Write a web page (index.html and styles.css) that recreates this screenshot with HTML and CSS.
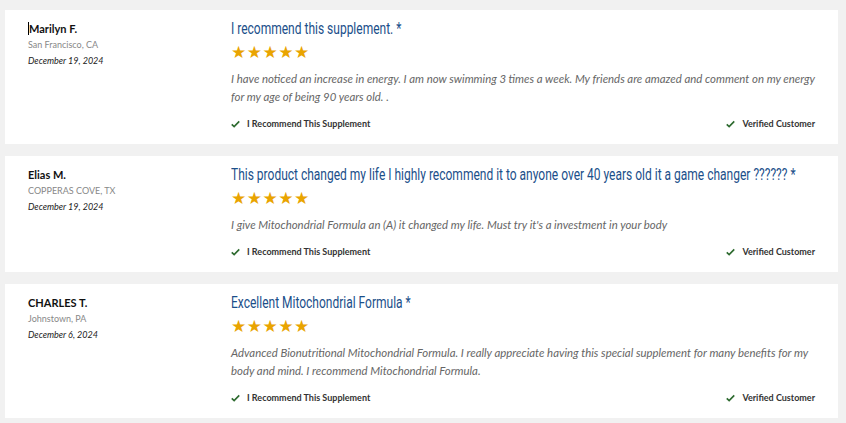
FILE: index.html
```html
<!DOCTYPE html>
<html>
<head>
<meta charset="utf-8">
<link rel="stylesheet" href="styles.css">
</head>
<body>
<div class="list">
  <div class="card">
    <div class="meta">
      <div class="name"><span class="caret"></span>Marilyn F.</div>
      <div class="loc">San Francisco, CA</div>
      <div class="date">December 19, 2024</div>
    </div>
    <div class="main">
      <div class="title">I recommend this supplement. *</div>
      <div class="stars">★★★★★</div>
      <div class="body">I have noticed an increase in energy. I am now swimming 3 times a week. My friends are amazed and comment on my energy for my age of being 90 years old. .</div>
      <div class="foot">
        <span class="tag"><svg class="chk" viewBox="0 0 12 10"><path d="M1 5.5 L4.2 8.5 L11 1.5" /></svg>I Recommend This Supplement</span>
        <span class="tag"><svg class="chk" viewBox="0 0 12 10"><path d="M1 5.5 L4.2 8.5 L11 1.5" /></svg>Verified Customer</span>
      </div>
    </div>
  </div>
  <div class="card">
    <div class="meta">
      <div class="name">Elias M.</div>
      <div class="loc">COPPERAS COVE, TX</div>
      <div class="date">December 19, 2024</div>
    </div>
    <div class="main">
      <div class="title">This product changed my life I highly recommend it to anyone over 40 years old it a game changer ?????? *</div>
      <div class="stars">★★★★★</div>
      <div class="body">I give Mitochondrial Formula an (A) it changed my life. Must try it's a investment in your body</div>
      <div class="foot">
        <span class="tag"><svg class="chk" viewBox="0 0 12 10"><path d="M1 5.5 L4.2 8.5 L11 1.5" /></svg>I Recommend This Supplement</span>
        <span class="tag"><svg class="chk" viewBox="0 0 12 10"><path d="M1 5.5 L4.2 8.5 L11 1.5" /></svg>Verified Customer</span>
      </div>
    </div>
  </div>
  <div class="card">
    <div class="meta">
      <div class="name">CHARLES T.</div>
      <div class="loc">Johnstown, PA</div>
      <div class="date">December 6, 2024</div>
    </div>
    <div class="main">
      <div class="title">Excellent Mitochondrial Formula *</div>
      <div class="stars">★★★★★</div>
      <div class="body">Advanced Bionutritional Mitochondrial Formula. I really appreciate having this special supplement for many benefits for my body and mind. I recommend Mitochondrial Formula.</div>
      <div class="foot">
        <span class="tag"><svg class="chk" viewBox="0 0 12 10"><path d="M1 5.5 L4.2 8.5 L11 1.5" /></svg>I Recommend This Supplement</span>
        <span class="tag"><svg class="chk" viewBox="0 0 12 10"><path d="M1 5.5 L4.2 8.5 L11 1.5" /></svg>Verified Customer</span>
      </div>
    </div>
  </div>
</div>
</body>
</html>
```
FILE: styles.css
```css
html, body {
  margin: 0;
  padding: 0;
  background: #f1f1f1;
}
body {
  font-family: Lato, "Open Sans", sans-serif;
  color: #222;
}
.list {
  display: flex;
  flex-direction: column;
  gap: 12px;
  padding: 10px 8px 0 5px;
}
.card {
  background: #fff;
  display: flex;
  padding: 9px 23px 14px 23px;
}
.meta {
  width: 203px;
  flex: none;
  padding-top: 3px;
}
.name {
  font-size: 11px;
  font-weight: 700;
  color: #111;
  line-height: 13px;
  display: flex;
  align-items: center;
}
.caret {
  display: inline-block;
  width: 1px;
  height: 13px;
  background: #000;
}
.loc {
  font-size: 9px;
  color: #888;
  margin-top: 4px;
  line-height: 12px;
}
.date {
  font-size: 9px;
  font-style: italic;
  color: #222;
  margin-top: 4px;
  line-height: 12px;
}
.main {
  flex: 1;
  min-width: 0;
}
.title {
  font-family: Roboto, sans-serif;
  font-size: 16px;
  color: #1b4f8a;
  line-height: 20px;
  width: calc(100% / 0.75);
  transform: scaleX(0.75);
  transform-origin: 0 50%;
}
.stars {
  color: #e9a400;
  font-size: 17px;
  letter-spacing: 0.5px;
  line-height: 18px;
  margin-top: 4px;
  font-family: "DejaVu Sans", sans-serif;
}
.body {
  font-size: 11.4px;
  font-style: italic;
  color: #666;
  line-height: 18px;
  margin-top: 9px;
}
.foot {
  display: flex;
  justify-content: space-between;
  margin-top: 12px;
  font-size: 9px;
  font-weight: 700;
  color: #333;
  line-height: 12px;
}
.tag {
  display: flex;
  align-items: center;
}
.chk {
  width: 9px;
  height: 8px;
  margin-right: 7px;
  fill: none;
  stroke: #2d6a2f;
  stroke-width: 2.2;
}
```
